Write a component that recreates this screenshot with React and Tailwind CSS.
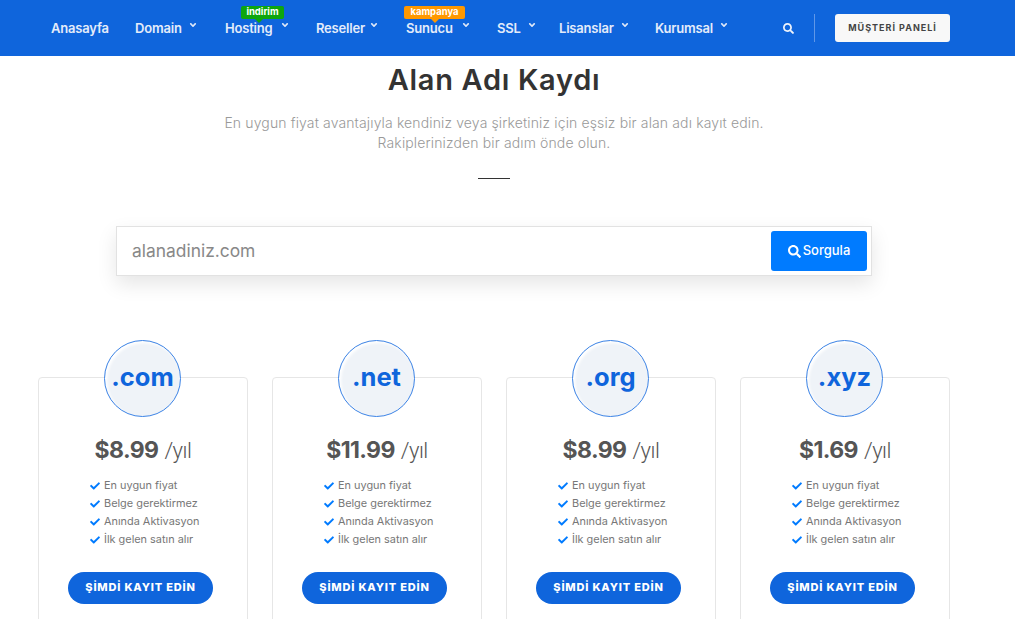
import React from 'react';
import { FaSearch, FaCheck, FaAngleDown } from 'react-icons/fa';

const navItems = [
    { label: 'Anasayfa', width: 'w-[84px]' },
    { label: 'Domain', width: 'w-[90px]', caret: true },
    { label: 'Hosting', width: 'w-[91px]', caret: true, gap: 'ml-[8px]', badge: 'indirim', badgeClass: 'bg-[#0ea60e] left-[16px] w-[43px]', tipClass: 'border-t-[#0ea60e] left-[30px]' },
    { label: 'Reseller', width: 'w-[90px]', caret: true, gap: 'ml-[4px]' },
    { label: 'Sunucu', width: 'w-[91px]', caret: true, gap: 'ml-[8px]', badge: 'kampanya', badgeClass: 'bg-[#ff9800] left-[-2px] w-[61px]', tipClass: 'border-t-[#ff9800] left-[25px]' },
    { label: 'SSL', width: 'w-[62px]', caret: true },
    { label: 'Lisanslar', width: 'w-[96px]', caret: true },
    { label: 'Kurumsal', width: 'w-[105px]', caret: true },
];

const plans = [
    { ext: '.com', price: '$8.99' },
    { ext: '.net', price: '$11.99' },
    { ext: '.org', price: '$8.99' },
    { ext: '.xyz', price: '$1.69' },
];

const features = ['En uygun fiyat', 'Belge gerektirmez', 'Anında Aktivasyon', 'İlk gelen satın alır'];

function NavItem({ item }) {
    return (
        <div className={`relative mt-[1px] flex items-center ${item.width}`}>
            {item.badge && (
                <>
                    <span className={`absolute top-[-13px] h-[13px] rounded-[2px] text-center text-[9.5px] font-bold leading-[12px] text-white ${item.badgeClass}`}>
                        {item.badge}
                    </span>
                    <span className={`absolute top-0 h-0 w-0 border-x-[4px] border-t-[4px] border-x-transparent ${item.tipClass}`} />
                </>
            )}
            <span className="text-[13px] font-semibold tracking-[-0.2px] text-[#e4ecfa]">{item.label}</span>
            {item.caret && <FaAngleDown className={`mt-[-7px] h-[10px] w-[10px] text-[#dfe8f8] ${item.gap || 'ml-[6px]'}`} />}
        </div>
    );
}

function PlanCard({ plan }) {
    return (
        <div className="relative h-[260px] w-[210px] rounded-[4px] border border-[#e6e6e6] bg-white">
            <div className="absolute left-[65px] top-[-38px] flex h-[77px] w-[77px] items-center justify-center rounded-full border border-[#3d84e6] bg-[#eff3f8] shadow-[inset_2px_2px_3px_#ffffff]">
                <span className="mt-[-2px] text-[25.5px] font-bold text-[#0f65dc]">{plan.ext}</span>
            </div>
            <div className="mt-[55px] flex items-baseline justify-center gap-[6px] text-[#555555]">
                <span className="text-[23px] font-bold tracking-[-0.6px]">{plan.price}</span>
                <span className="font-['Roboto',sans-serif] text-[22px] font-light tracking-[-0.5px]">/yıl</span>
            </div>
            <ul className="mt-[9px] pl-[51px]">
                {features.map((f) => (
                    <li key={f} className="flex h-[18px] items-center gap-[4px] text-[10.9px] text-[#777777]">
                        <FaCheck className="h-[10px] w-[10px] text-[#007bff]" />
                        {f}
                    </li>
                ))}
            </ul>
            <div className="ml-[29px] mt-[23px]">
                <button className="h-[32px] w-[145px] rounded-full bg-[#0f65dc] text-[11px] font-extrabold tracking-[0.8px] text-white">
                    ŞİMDİ KAYIT EDİN
                </button>
            </div>
        </div>
    );
}

export default function App() {
    return (
        <div className="h-[619px] overflow-hidden bg-white font-['Inter',sans-serif]">
            <header className="flex h-[56px] items-center justify-between bg-[#0f65dc] pl-[51px] pr-[65px]">
                <nav className="flex items-center">
                    {navItems.map((item) => <NavItem key={item.label} item={item} />)}
                </nav>
                <div className="flex items-center">
                    <FaSearch className="h-[11px] w-[11px] text-[#eef3fb]" />
                    <div className="ml-[20px] h-[28px] w-px bg-[#5f97e8]" />
                    <button className="ml-[20px] h-[28px] w-[115px] rounded-[3px] bg-[#f8f8f8] text-[9px] font-bold tracking-[1px] text-[#444444]">
                        MÜŞTERİ PANELİ
                    </button>
                </div>
            </header>

            <main className="w-[988px]">
                <h1 className="mt-[5px] text-center text-[29px] font-semibold leading-[38px] tracking-[0.7px] text-[#333333]">Alan Adı Kaydı</h1>
                <p className="mt-[14px] text-center text-[14px] font-light leading-[20px] tracking-[0.13px] text-[#999999]">
                    En uygun fiyat avantajıyla kendiniz veya şirketiniz için eşsiz bir alan adı kayıt edin.
                    <br />
                    Rakiplerinizden bir adım önde olun.
                </p>
                <div className="mx-auto mt-[25px] h-px w-[32px] bg-[#333333]" />

                <div className="ml-[116px] mt-[47px] flex h-[50px] w-[756px] items-center justify-between border border-[#e2e2e2] pl-[15px] pr-[4px] shadow-[0_8px_20px_rgba(0,0,0,0.1)]">
                    <span className="text-[17.4px] text-[#888888]">alanadiniz.com</span>
                    <button className="flex h-[40px] w-[96px] items-center justify-center gap-[2px] rounded-[3px] bg-[#007bff] text-[13px] font-medium text-white">
                        <FaSearch className="h-[13px] w-[13px]" />
                        Sorgula
                    </button>
                </div>

                <div className="ml-[38px] mt-[101px] flex gap-[24px]">
                    {plans.map((plan) => <PlanCard key={plan.ext} plan={plan} />)}
                </div>
            </main>
        </div>
    );
}
